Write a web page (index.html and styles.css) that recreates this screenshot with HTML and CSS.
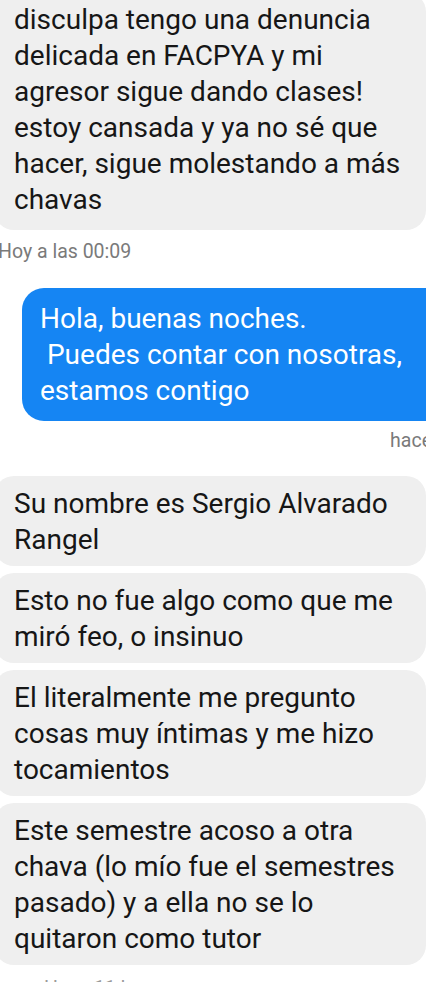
FILE: index.html
```html
<!DOCTYPE html>
<html lang="es">
<head>
<meta charset="utf-8">
<title>Chat</title>
<link rel="stylesheet" href="styles.css">
</head>
<body>
<main class="thread">
  <div class="bubble in first">disculpa tengo una denuncia<br>delicada en FACPYA y mi<br>agresor sigue dando clases!<br>estoy cansada y ya no sé que<br>hacer, sigue molestando a más<br>chavas</div>
  <div class="stamp left">Hoy a las 00:09</div>
  <div class="bubble out">Hola, buenas noches.<br>&nbsp;Puedes contar con nosotras,<br>estamos contigo</div>
  <div class="stamp right">hace</div>
  <div class="group">
    <div class="bubble in">Su nombre es Sergio Alvarado<br>Rangel</div>
    <div class="bubble in">Esto no fue algo como que me<br>miró feo, o insinuo</div>
    <div class="bubble in">El literalmente me pregunto<br>cosas muy íntimas y me hizo<br>tocamientos</div>
    <div class="bubble in">Este semestre acoso a otra<br>chava (lo mío fue el semestres<br>pasado) y a ella no se lo<br>quitaron como tutor</div>
  </div>
  <div class="stamp bottom">Hace 11 h</div>
</main>
</body>
</html>
```

FILE: styles.css
```css
html, body {
  margin: 0;
  padding: 0;
  background: #ffffff;
}
body {
  width: 426px;
  height: 982px;
  overflow: hidden;
  font-family: Roboto, "Noto Sans", "Liberation Sans", sans-serif;
}
.thread {
  display: flex;
  flex-direction: column;
}
.bubble {
  font-size: 28px;
  line-height: 36px;
  color: #161616;
  white-space: nowrap;
}
.bubble.in {
  background: #efefef;
  margin-left: -6px;
  margin-right: 0;
  padding: 10px 14px 8px 20px;
  border-radius: 20px;
}
.bubble.first {
  margin-top: -8px;
  padding-bottom: 12px;
}
.bubble.out {
  background: #1585f3;
  color: #ffffff;
  margin-left: 22px;
  margin-right: -24px;
  margin-top: 24px;
  padding: 13px 18px 12px 18px;
  border-radius: 22px;
}
.group {
  display: flex;
  flex-direction: column;
  gap: 7px;
  margin-top: 23px;
}
.stamp {
  font-size: 19.5px;
  line-height: 24px;
  color: #7a7a7a;
}
.stamp.left {
  margin-top: 10px;
  margin-left: -2px;
}
.stamp.right {
  margin-top: 8px;
  align-self: flex-end;
  margin-right: -6px;
}
.stamp.bottom {
  margin-top: 12px;
  margin-left: 44px;
  color: #9a9a9a;
}
```
